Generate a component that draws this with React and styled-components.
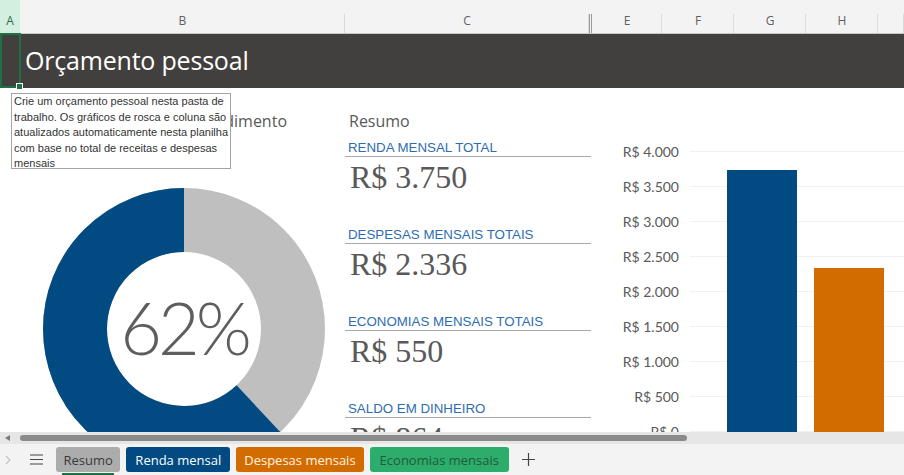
import React from 'react';
import styled, { createGlobalStyle } from 'styled-components';

const GlobalStyle = createGlobalStyle`
  html, body {
    margin: 0;
    padding: 0;
    background: #fff;
  }
  body {
    width: 904px;
    height: 475px;
    overflow: hidden;
  }
`;

const Window = styled.div`
  position: relative;
  width: 904px;
  height: 475px;
  display: flex;
  flex-direction: column;
  overflow: hidden;
  font-family: 'Open Sans', 'Noto Sans', sans-serif;
`;

// column letters row
const ColumnHeaders = styled.div`
  display: flex;
  height: 33px;
  flex-shrink: 0;
  background: #f3f3f3;
  border-bottom: 1px solid #c6c6c6;
`;

const ColHead = styled.div`
  width: ${p => p.$w}px;
  flex: ${p => (p.$grow ? '1' : '0 0 auto')};
  box-sizing: border-box;
  display: flex;
  align-items: flex-end;
  justify-content: center;
  padding-bottom: 4px;
  font-size: 12px;
  color: ${p => (p.$active ? '#2f6a47' : '#5f5f5f')};
  background: ${p =>
    p.$active
      ? '#d3efdf'
      : 'linear-gradient(#dadada, #dadada) right bottom / 1px 19px no-repeat'};
`;

const HiddenCol = styled.div`
  width: 3px;
  flex-shrink: 0;
  background:
    linear-gradient(#9a9a9a, #9a9a9a) left bottom / 1px 19px no-repeat,
    linear-gradient(#9a9a9a, #9a9a9a) right bottom / 1px 19px no-repeat;
`;

const Selection = styled.div`
  position: absolute;
  left: 0;
  top: 33px;
  width: 21px;
  height: 55px;
  box-sizing: border-box;
  border: 2px solid #1e7145;
  pointer-events: none;
`;

const Handle = styled.div`
  position: absolute;
  right: -4px;
  bottom: -4px;
  width: 5px;
  height: 5px;
  background: #1e7145;
  border: 1px solid #fff;
`;

const Sheet = styled.div`
  position: relative;
  height: 398px;
  flex-shrink: 0;
  overflow: hidden;
  background: #fff;
`;

const TitleBar = styled.div`
  height: 54px;
  display: flex;
  align-items: center;
  background: #41403e;
`;

const Title = styled.h1`
  margin: 0 0 2px 25px;
  font-size: 25px;
  font-weight: 400;
  color: #fff;
  letter-spacing: -0.2px;
`;

const Body = styled.div`
  display: grid;
  grid-template-columns: 345px 246px 1fr;
`;

const LeftCol = styled.div`
  display: flex;
  flex-direction: column;
`;

const SectionHeading = styled.div`
  margin-top: 23px;
  line-height: 20px;
  font-size: 16px;
  color: #595959;
  white-space: nowrap;
  width: ${p => (p.$w ? `${p.$w}px` : 'auto')};
  text-align: ${p => (p.$right ? 'right' : 'left')};
  padding-left: ${p => p.$pad || 0}px;
`;

const DonutWrap = styled.div`
  margin: 57px 0 0 43px;
  width: 282px;
  height: 282px;
  display: grid;
  place-items: center;

  & > * {
    grid-area: 1 / 1;
  }
`;

const DonutLabel = styled.div`
  font-family: Lato, 'Open Sans', sans-serif;
  font-weight: 300;
  font-size: 72px;
  letter-spacing: -4px;
  color: #5e5e5e;
  line-height: 1;
  margin-top: -4px;
`;

const MidCol = styled.div`
  display: flex;
  flex-direction: column;
`;

const SummaryList = styled.div`
  margin-top: 8px;
  display: flex;
  flex-direction: column;
`;

const SummaryItem = styled.div`
  height: 87px;
  display: flex;
  flex-direction: column;
`;

const SummaryLabel = styled.div`
  height: 17px;
  line-height: 17px;
  padding-left: 3px;
  border-bottom: 1px solid #a8a8a8;
  font-family: 'Liberation Sans', Arial, sans-serif;
  font-size: 13.3px;
  color: #2d6daf;
`;

const SummaryValue = styled.div`
  padding: 5px 0 0 5px;
  font-family: 'Liberation Serif', 'Times New Roman', serif;
  font-size: 32px;
  line-height: 30px;
  color: #595959;
`;

const RightCol = styled.div`
  padding-top: 46px;
`;

const Chart = styled.div`
  display: grid;
  grid-template-columns: 88px 1fr;
`;

const Axis = styled.div`
  display: flex;
  flex-direction: column;
`;

const Tick = styled.div`
  height: 35px;
  display: flex;
  align-items: center;
  justify-content: flex-end;
  font-family: Lato, 'Open Sans', sans-serif;
  font-size: 14px;
  color: #595959;
  white-space: nowrap;
`;

const Plot = styled.div`
  margin: 17px 0 0 11px;
  height: 281px;
  display: flex;
  align-items: flex-end;
  gap: 17px;
  padding-left: 37px;
  background: repeating-linear-gradient(
    to bottom,
    #f1f1f1 0,
    #f1f1f1 1px,
    transparent 1px,
    transparent 35px
  );
`;

const Bar = styled.div`
  width: 70px;
  flex-shrink: 0;
  background: ${p => p.$color};
`;

const Note = styled.div`
  position: absolute;
  left: 11px;
  top: 59px;
  width: 220px;
  height: 76px;
  box-sizing: border-box;
  padding: 0 2px;
  border: 1px solid #a3a3a3;
  background: #fff;
  overflow: hidden;
  font-family: 'Liberation Sans', Arial, sans-serif;
  font-size: 11px;
  line-height: 15.5px;
  color: #333;
  white-space: nowrap;
`;

const NoteLine = styled.div``;

// scrollbar row
const ScrollRow = styled.div`
  height: 12px;
  flex-shrink: 0;
  display: flex;
  align-items: center;
  background: #e6e6e6;
`;

const ScrollArrow = styled.div`
  width: 0;
  height: 0;
  margin-left: 5px;
  border-top: 3.5px solid transparent;
  border-bottom: 3.5px solid transparent;
  border-right: 5px solid #7a7a7a;
`;

const ScrollThumb = styled.div`
  margin-left: 10px;
  width: 667px;
  height: 6px;
  border-radius: 3px;
  background: #8a8a8a;
`;

// sheet tabs
const TabBar = styled.div`
  flex: 1;
  display: flex;
  align-items: flex-start;
  padding-top: 3px;
  background: #f3f3f3;
`;

const IconBox = styled.div`
  width: ${p => p.$w}px;
  height: 25px;
  flex-shrink: 0;
  display: flex;
  align-items: center;
  justify-content: center;
`;

const Tabs = styled.div`
  display: flex;
  gap: 6px;
`;

const TabItem = styled.div`
  display: flex;
  flex-direction: column;
  align-items: stretch;
`;

const Tab = styled.div`
  height: 25px;
  padding: 0 ${p => p.$pad || 9}px;
  display: flex;
  align-items: center;
  border-radius: 3px;
  font-size: 13px;
  white-space: nowrap;
  background: ${p => p.$bg};
  color: ${p => p.$fg};
`;

const TabLine = styled.div`
  height: 3px;
  margin: 1px 6px 0;
  background: ${p => (p.$on ? '#1e7145' : 'transparent')};
`;

const columns = [
  { id: 'A', w: 20, active: true },
  { id: 'B', w: 325 },
  { id: 'C', w: 244 },
  { hidden: true },
  { id: 'E', w: 70 },
  { id: 'F', w: 72 },
  { id: 'G', w: 72 },
  { id: 'H', w: 72 },
  { id: '', w: 26, grow: true },
];

const summary = [
  { label: 'RENDA MENSAL TOTAL', value: 'R$ 3.750' },
  { label: 'DESPESAS MENSAIS TOTAIS', value: 'R$ 2.336' },
  { label: 'ECONOMIAS MENSAIS TOTAIS', value: 'R$ 550' },
  { label: 'SALDO EM DINHEIRO', value: 'R$ 864' },
];

const ticks = ['R$ 4.000', 'R$ 3.500', 'R$ 3.000', 'R$ 2.500', 'R$ 2.000', 'R$ 1.500', 'R$ 1.000', 'R$ 500', 'R$ 0'];

const bars = [
  { value: 3750, color: '#014a82' },
  { value: 2336, color: '#d36c00' },
];

const tabs = [
  { name: 'Resumo', bg: '#acacac', fg: '#3a3a3a', active: true, pad: 7.5 },
  { name: 'Renda mensal', bg: '#014a82', fg: '#ffffff' },
  { name: 'Despesas mensais', bg: '#d36c00', fg: '#fff4e2', pad: 8 },
  { name: 'Economias mensais', bg: '#2cad6b', fg: '#225a3a', pad: 10 },
];

function Donut({ percent }) {
  const r = 109;
  const c = 2 * Math.PI * r;
  const blue = c * percent;
  const gray = c - blue;
  return (
    <svg width="282" height="282" viewBox="0 0 282 282">
      <g transform="rotate(-90 141 141)">
        <circle cx="141" cy="141" r={r} fill="none" stroke="#bfbfbf" strokeWidth="64" />
        <circle
          cx="141"
          cy="141"
          r={r}
          fill="none"
          stroke="#014a82"
          strokeWidth="64"
          strokeDasharray={`${blue} ${c}`}
          strokeDashoffset={-gray}
        />
      </g>
    </svg>
  );
}

export default function App() {
  const scale = 280 / 4000;

  return (
    <Window>
      <GlobalStyle />
      <ColumnHeaders>
        {columns.map((col, i) =>
          col.hidden ? (
            <HiddenCol key={i} />
          ) : (
            <ColHead key={i} $w={col.w} $grow={col.grow} $active={col.active}>
              {col.id}
            </ColHead>
          )
        )}
      </ColumnHeaders>

      <Sheet>
        <TitleBar>
          <Title>Orçamento pessoal</Title>
        </TitleBar>
        <Body>
          <LeftCol>
            <SectionHeading $w={287} $right>
              Porcentagem gasta do rendimento
            </SectionHeading>
            <DonutWrap>
              <Donut percent={0.62} />
              <DonutLabel>62%</DonutLabel>
            </DonutWrap>
          </LeftCol>

          <MidCol>
            <SectionHeading $pad={4}>Resumo</SectionHeading>
            <SummaryList>
              {summary.map(s => (
                <SummaryItem key={s.label}>
                  <SummaryLabel>{s.label}</SummaryLabel>
                  <SummaryValue>{s.value}</SummaryValue>
                </SummaryItem>
              ))}
            </SummaryList>
          </MidCol>

          <RightCol>
            <Chart>
              <Axis>
                {ticks.map(t => (
                  <Tick key={t}>{t}</Tick>
                ))}
              </Axis>
              <Plot>
                {bars.map(b => (
                  <Bar key={b.color} $color={b.color} style={{ height: b.value * scale }} />
                ))}
              </Plot>
            </Chart>
          </RightCol>
        </Body>

        <Note>
          <NoteLine>Crie um orçamento pessoal nesta pasta de</NoteLine>
          <NoteLine>trabalho. Os gráficos de rosca e coluna são</NoteLine>
          <NoteLine>atualizados automaticamente nesta planilha</NoteLine>
          <NoteLine>com base no total de receitas e despesas</NoteLine>
          <NoteLine>mensais</NoteLine>
        </Note>
      </Sheet>

      <ScrollRow>
        <ScrollArrow />
        <ScrollThumb />
      </ScrollRow>

      <TabBar>
        <IconBox $w={16}>
          <svg width="6" height="10" viewBox="0 0 6 10">
            <path d="M1 1l4 4-4 4" fill="none" stroke="#c2c2c2" strokeWidth="1.1" />
          </svg>
        </IconBox>
        <IconBox $w={40}>
          <svg width="13" height="11" viewBox="0 0 13 11">
            <path d="M0 1h13M0 5.5h13M0 10h13" stroke="#444" strokeWidth="1.2" />
          </svg>
        </IconBox>
        <Tabs>
          {tabs.map(t => (
            <TabItem key={t.name}>
              <Tab $bg={t.bg} $fg={t.fg} $pad={t.pad}>
                {t.name}
              </Tab>
              <TabLine $on={t.active} />
            </TabItem>
          ))}
        </Tabs>
        <IconBox $w={38}>
          <svg width="13" height="13" viewBox="0 0 13 13">
            <path d="M6.5 0v13M0 6.5h13" stroke="#444" strokeWidth="1.2" />
          </svg>
        </IconBox>
      </TabBar>

      <Selection>
        <Handle />
      </Selection>
    </Window>
  );
}
